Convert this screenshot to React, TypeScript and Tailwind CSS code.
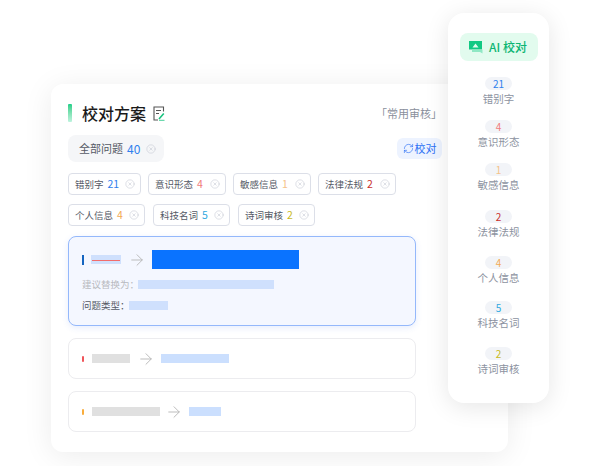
import { ArrowRight, CircleX, RefreshCw } from 'lucide-react';

const chipRows = [
  [
    { name: '错别字', count: '21', color: 'text-[#2f80ed]', width: 'w-[73px]' },
    { name: '意识形态', count: '4', color: 'text-[#f07c7c]', width: 'w-[78px]' },
    { name: '敏感信息', count: '1', color: 'text-[#f5c28a]', width: 'w-[78px]' },
    { name: '法律法规', count: '2', color: 'text-[#c9302c]', width: 'w-[78px]' },
  ],
  [
    { name: '个人信息', count: '4', color: 'text-[#f2aa55]', width: 'w-[77px]' },
    { name: '科技名词', count: '5', color: 'text-[#2fa8e0]', width: 'w-[77px]' },
    { name: '诗词审核', count: '2', color: 'text-[#c9bb1e]', width: 'w-[77px]' },
  ],
];

const sideItems = [
  { name: '错别字', count: '21', color: 'text-[#2f80ed]', gap: 'mt-[16px]' },
  { name: '意识形态', count: '4', color: 'text-[#f07c7c]', gap: 'mt-[14px]' },
  { name: '敏感信息', count: '1', color: 'text-[#f5c28a]', gap: 'mt-[14px]' },
  { name: '法律法规', count: '2', color: 'text-[#c9302c]', gap: 'mt-[18px]' },
  { name: '个人信息', count: '4', color: 'text-[#f2aa55]', gap: 'mt-[17px]' },
  { name: '科技名词', count: '5', color: 'text-[#2fa8e0]', gap: 'mt-[16px]' },
  { name: '诗词审核', count: '2', color: 'text-[#c9bb1e]', gap: 'mt-[17px]' },
];

function Chip({ name, count, color, width }: { name: string; count: string; color: string; width: string }) {
  return (
    <div className={`flex h-[22px] items-center rounded-[4px] border border-[#dcdfe8] bg-white pl-[6px] pr-[5px] text-[9.5px] text-[#555a66] ${width}`}>
      <span>{name}</span>
      <span className={`ml-[4px] text-[10.5px] ${color}`}>{count}</span>
      <CircleX className="ml-auto text-[#c2c6d0]" size={10} strokeWidth={1.3} />
    </div>
  );
}

function NoteIcon() {
  return (
    <svg width="12" height="15" viewBox="0 0 12 15" fill="none">
      <path d="M10.500 5.500V1H1v13h4" stroke="#555" strokeWidth="1.1" />
      <path d="M3 4.500h5M3 7.500h3" stroke="#555" strokeWidth="1" />
      <path d="M6 13L10.800 7.500" stroke="#18c27e" strokeWidth="1.6" />
      <path d="M6 14.300h5.500" stroke="#18c27e" strokeWidth="0.8" />
    </svg>
  );
}

function AiIcon() {
  return (
    <svg width="14" height="14" viewBox="0 0 14 14" fill="none">
      <path d="M0 1h13v8.500H0z" fill="#12c983" />
      <path d="M3 9.500h10.500V13.500L11 12H3z" fill="#8fe8c4" />
      <path d="M6.500 3.500L9.500 7.500H3.500z" fill="#e2fbee" />
    </svg>
  );
}

export default function App() {
  return (
    <div className="relative h-[466px] w-[600px] overflow-hidden bg-white pl-[51px] pt-[84px] font-['Noto_Sans_CJK_SC','Noto_Sans',sans-serif]">
      <div className="h-[368px] w-[457px] rounded-[12px] bg-white px-[17px] pt-[20px] shadow-[0_4px_30px_rgba(0,0,0,0.08)]">
        <div className="flex h-[18px] w-[374px] items-center">
          <div className="h-[18px] w-[4px] rounded-[1px] bg-gradient-to-b from-[#16cf8a] to-[#bdf3de]" />
          <h1 className="ml-[10px] text-[16px] font-medium leading-none text-[#1a1a1a]">校对方案</h1>
          <div className="ml-[7px]">
            <NoteIcon />
          </div>
          <span className="ml-auto whitespace-nowrap text-[11px] text-[#8a8f9c]">「常用审核」</span>
        </div>

        <div className="mt-[13px] flex w-[374px] items-center justify-between">
          <div className="flex h-[27px] w-[96px] items-center rounded-[8px] bg-[#f5f6f8] pl-[11px] text-[11px] text-[#555a66]">
            <span>全部问题</span>
            <span className="ml-[4px] text-[12px] text-[#2f80ed]">40</span>
            <CircleX className="ml-[6px] text-[#c2c6d0]" size={10} strokeWidth={1.3} />
          </div>
          <div className="flex h-[21px] w-[45px] items-center justify-center gap-px rounded-[6px] bg-[#edf3ff] text-[11px] text-[#2a6ff5]">
            <RefreshCw size={11} strokeWidth={1.4} />
            <span>校对</span>
          </div>
        </div>

        <div className="mt-[11px] flex flex-col gap-[9px]">
          {chipRows.map((row, i) => (
            <div key={i} className={i === 0 ? 'flex gap-[7px]' : 'flex gap-[8px]'}>
              {row.map((chip) => (
                <Chip key={chip.name} {...chip} />
              ))}
            </div>
          ))}
        </div>

        <div className="mt-[10px] h-[90px] w-[348px] rounded-[8px] border border-[#94b8fb] bg-[#f4f7ff] px-[13px] pt-[13px] shadow-[0_2px_6px_rgba(60,110,240,0.12)]">
          <div className="flex h-[19px] items-center">
            <div className="h-[10px] w-[2px] bg-[#1565c0]" />
            <div className="relative ml-[7px] h-[9px] w-[30px] bg-[#cfe0fd]">
              <div className="absolute left-[1px] right-[1px] top-[5px] h-px bg-[#f26d6d]" />
            </div>
            <ArrowRight className="ml-[7px] text-[#b5b5b5]" size={18} strokeWidth={1.2} />
            <div className="ml-[6px] h-[19px] w-[147px] bg-[#0a73ff]" />
          </div>
          <div className="mt-[10px] flex h-[11px] items-center text-[9.5px] text-[#b8bac0]">
            <span>建议替换为：</span>
            <div className="ml-[-1px] h-[9px] w-[136px] bg-[#cfe0fd]" />
          </div>
          <div className="mt-[10px] flex h-[11px] items-center text-[9.5px] text-[#555a66]">
            <span>问题类型：</span>
            <div className="ml-[-1px] h-[9px] w-[39px] bg-[#cfe0fd]" />
          </div>
        </div>

        <div className="mt-[12px] flex h-[41px] w-[348px] items-center rounded-[8px] border border-[#ececef] bg-white pl-[13px]">
          <div className="h-[6px] w-[2px] rounded-full bg-[#f0555a]" />
          <div className="ml-[8px] h-[9px] w-[38px] bg-[#e0e0e0]" />
          <ArrowRight className="ml-[7px] text-[#b5b5b5]" size={18} strokeWidth={1.2} />
          <div className="ml-[6px] h-[9px] w-[68px] bg-[#cbdffe]" />
        </div>

        <div className="mt-[12px] flex h-[41px] w-[348px] items-center rounded-[8px] border border-[#ececef] bg-white pl-[13px]">
          <div className="h-[6px] w-[2px] rounded-full bg-[#f9ad3c]" />
          <div className="ml-[8px] h-[9px] w-[68px] bg-[#e0e0e0]" />
          <ArrowRight className="ml-[5px] text-[#b5b5b5]" size={18} strokeWidth={1.2} />
          <div className="ml-[6px] h-[9px] w-[32px] bg-[#cbdffe]" />
        </div>
      </div>

      <aside className="absolute left-[448px] top-[13px] flex h-[390px] w-[101px] flex-col items-center rounded-[16px] bg-white pt-[20px] shadow-[0_4px_24px_rgba(0,0,0,0.1)]">
        <div className="flex h-[28px] w-[78px] items-center justify-center gap-[6px] rounded-[8px] bg-[#e2fbee] pr-px text-[12px] font-medium text-[#0cb573]">
          <AiIcon />
          <span className="whitespace-nowrap">AI 校对</span>
        </div>
        {sideItems.map((item) => (
          <div key={item.name} className={`flex flex-col items-center ${item.gap}`}>
            <div className={`flex h-[13px] w-[27px] items-center justify-center rounded-full bg-[#f2f4f8] text-[10px] leading-none ${item.color}`}>
              {item.count}
            </div>
            <span className="mt-[1px] text-[10.5px] leading-[15px] text-[#8d93a1]">{item.name}</span>
          </div>
        ))}
      </aside>
    </div>
  );
}
